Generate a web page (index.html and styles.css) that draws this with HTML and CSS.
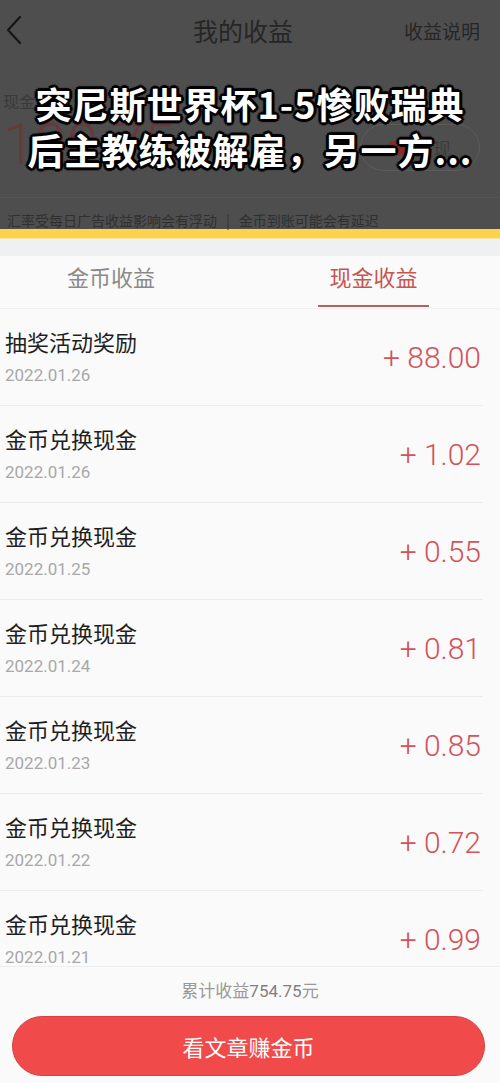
FILE: index.html
```html
<!DOCTYPE html>
<html lang="zh-CN">
<head>
  <meta charset="UTF-8">
  <meta name="viewport" content="width=device-width, initial-scale=1.0">
  <title>我的收益</title>
  <link rel="stylesheet" href="styles.css">
</head>
<body>
  <header class="banner">
    <div class="nav">
      <svg class="back" width="16" height="30" viewBox="0 0 16 30">
        <polyline points="14,2 2,15 14,28" fill="none" stroke="#161616" stroke-width="2.2" stroke-linecap="round" stroke-linejoin="round"/>
      </svg>
      <div class="nav-title">我的收益</div>
      <div class="nav-link">收益说明</div>
    </div>
    <div class="balance">
      <div class="balance-info">
        <div class="balance-label">现金余额(元)</div>
        <div class="balance-num">100.75</div>
      </div>
      <div class="withdraw"><span class="withdraw-icon"></span>提现</div>
    </div>
    <div class="note">汇率受每日广告收益影响会有浮动<span class="note-sep">|</span>金币到账可能会有延迟</div>
    <h1 class="headline">突尼斯世界杯1-5惨败瑞典<br>后主教练被解雇，另一方...</h1>
  </header>
  <div class="yellow-bar"></div>
  <div class="gap"></div>

  <div class="tabs">
    <div class="tab">金币收益</div>
    <div class="tab tab-active">现金收益</div>
  </div>

  <div class="list">
    <div class="row">
      <div class="row-info">
        <div class="row-title">抽奖活动奖励</div>
        <div class="row-date">2022.01.26</div>
      </div>
      <div class="row-amount">+ 88.00</div>
    </div>
    <div class="row">
      <div class="row-info">
        <div class="row-title">金币兑换现金</div>
        <div class="row-date">2022.01.26</div>
      </div>
      <div class="row-amount">+ 1.02</div>
    </div>
    <div class="row">
      <div class="row-info">
        <div class="row-title">金币兑换现金</div>
        <div class="row-date">2022.01.25</div>
      </div>
      <div class="row-amount">+ 0.55</div>
    </div>
    <div class="row">
      <div class="row-info">
        <div class="row-title">金币兑换现金</div>
        <div class="row-date">2022.01.24</div>
      </div>
      <div class="row-amount">+ 0.81</div>
    </div>
    <div class="row">
      <div class="row-info">
        <div class="row-title">金币兑换现金</div>
        <div class="row-date">2022.01.23</div>
      </div>
      <div class="row-amount">+ 0.85</div>
    </div>
    <div class="row">
      <div class="row-info">
        <div class="row-title">金币兑换现金</div>
        <div class="row-date">2022.01.22</div>
      </div>
      <div class="row-amount">+ 0.72</div>
    </div>
    <div class="row">
      <div class="row-info">
        <div class="row-title">金币兑换现金</div>
        <div class="row-date">2022.01.21</div>
      </div>
      <div class="row-amount">+ 0.99</div>
    </div>
  </div>

  <div class="footer">
    <div class="total">累计收益<span class="total-num">754.75</span>元</div>
    <button class="earn-btn" type="button">看文章赚金币</button>
  </div>
</body>
</html>
```

FILE: styles.css
```css
body {
  margin: 0;
  width: 500px;
  height: 1083px;
  overflow: hidden;
  background-color: #fafafa;
  font-family: 'Noto Sans CJK SC', 'Noto Sans', sans-serif;
  color: #1f1f1f;
}

/* bandeau assombri en haut */
.banner {
  position: relative;
  height: 229px;
  background-color: #4e4e4e;
}

.nav {
  height: 60px;
  display: grid;
  grid-template-columns: 1fr auto 1fr;
  align-items: center;
  padding: 0 20px 0 6px;
}

.back {
  display: block;
}

.nav-title {
  font-size: 25px;
  color: #262626;
}

.nav-link {
  justify-self: end;
  font-size: 19px;
  color: #262626;
}

.balance {
  display: flex;
  justify-content: space-between;
  align-items: flex-end;
  padding: 31px 20px 22px 3px;
  border-bottom: 1px solid #565656;
}

.balance-label {
  font-size: 16px;
  line-height: 20px;
  color: #3a3a3a;
  margin-bottom: 4px;
}

.balance-num {
  font-family: 'Roboto', sans-serif;
  font-weight: 300;
  font-size: 57px;
  line-height: 60px;
  color: #6a3838;
}

.withdraw {
  width: 118px;
  height: 45px;
  margin-bottom: 4px;
  border: 1px solid #5c5c5c;
  border-radius: 24px;
  display: flex;
  align-items: center;
  justify-content: center;
  gap: 10px;
  font-size: 18px;
  color: #3c3c3c;
}

.withdraw-icon {
  width: 16px;
  height: 14px;
  border-radius: 3px;
  background-color: #8a2c2c;
}

.note {
  padding: 13px 0 0 7px;
  font-size: 14px;
  line-height: 18px;
  color: #303030;
}

.note-sep {
  margin: 0 9px;
}

.headline {
  position: absolute;
  top: 80px;
  left: 0;
  right: 0;
  margin: 0;
  text-align: center;
  font-size: 36px;
  line-height: 46px;
  font-weight: 700;
  letter-spacing: 1px;
  color: #fff;
  text-shadow:
    2px 0 0 #000, -2px 0 0 #000, 0 2px 0 #000, 0 -2px 0 #000,
    2px 2px 0 #000, -2px 2px 0 #000, 2px -2px 0 #000, -2px -2px 0 #000,
    3px 0 1px #000, -3px 0 1px #000, 0 3px 1px #000, 0 -3px 1px #000;
}

.yellow-bar {
  height: 9px;
  background-color: #fdd34e;
  border-bottom: 1px solid #fbe6a0;
}

.gap {
  height: 17px;
  background-color: #eff0f2;
}

/* onglets */
.tabs {
  display: flex;
  justify-content: space-between;
  padding: 0 71px 1px 67px;
  border-bottom: 1px solid #f0f0f0;
}

.tab {
  padding: 5px 0 14px;
  font-size: 22px;
  line-height: 30px;
  color: #8a8a8a;
  text-align: center;
  border-bottom: 2px solid transparent;
}

.tab-active {
  width: 111px;
  color: #c95450;
  border-bottom-color: #b0625e;
}

/* liste des gains */
.list {
  height: 657px;
  overflow: hidden;
}

.row {
  display: flex;
  justify-content: space-between;
  align-items: center;
  margin-right: 17px;
  padding: 19px 2px 19px 5px;
  border-bottom: 1px solid #ececec;
}

.row-title {
  font-size: 22px;
  line-height: 26px;
  color: #1f1f1f;
}

.row-date {
  margin-top: 10px;
  font-family: 'Roboto', sans-serif;
  font-size: 17px;
  line-height: 22px;
  color: #a8a8a8;
}

.row-amount {
  font-family: 'Roboto', sans-serif;
  font-weight: 300;
  font-size: 30px;
  color: #d2535a;
}

.footer {
  border-top: 1px solid #ededed;
  padding-top: 13px;
}

.total {
  text-align: center;
  font-size: 17px;
  line-height: 20px;
  color: #999;
}

.total-num {
  font-family: 'Roboto', sans-serif;
  color: #808080;
}

.earn-btn {
  display: block;
  width: 473px;
  height: 60px;
  margin: 15px 0 0 12px;
  border: 1px solid #d64242;
  border-radius: 30px;
  background-color: #f14a4a;
  color: #fff;
  font-family: 'Noto Sans CJK SC', sans-serif;
  font-size: 22px;
  cursor: pointer;
}
```
